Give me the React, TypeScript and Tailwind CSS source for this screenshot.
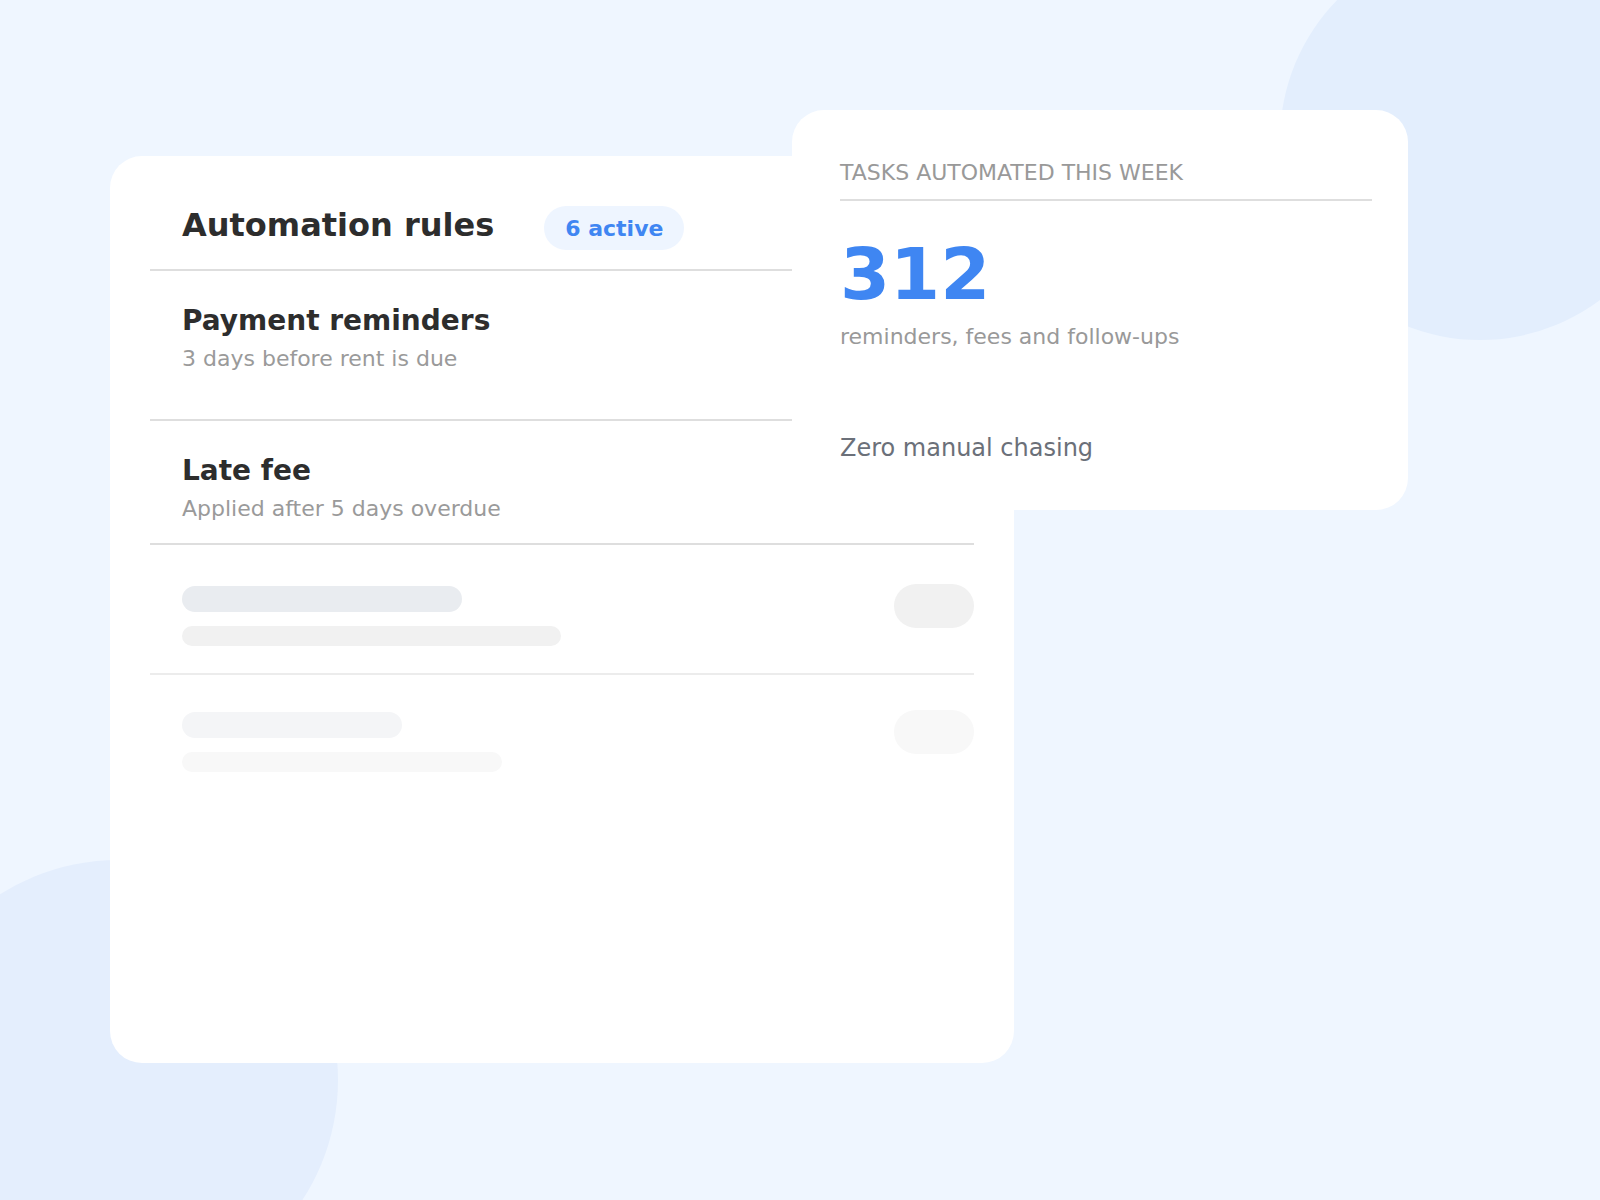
const rules = [
  { title: "Payment reminders", detail: "3 days before rent is due", pad: "pb-[47px]" },
  { title: "Late fee", detail: "Applied after 5 days overdue", pad: "pb-[21px]" },
];

function RuleRow({ title, detail, pad }: { title: string; detail: string; pad: string }) {
  return (
    <div className={`px-[32px] pt-[33px] border-b-2 border-[#dedede] ${pad}`}>
      <div className="text-[28px] leading-[33px] font-bold text-[#2d2d2d]">{title}</div>
      <div className="mt-[9px] text-[22px] leading-[26px] text-[#9a9a9a]">{detail}</div>
    </div>
  );
}

export default function App() {
  return (
    <div className="relative min-h-screen w-full overflow-hidden bg-[#eff6ff] font-['DejaVu_Sans',sans-serif]">
      {/* background blobs */}
      <div className="absolute left-[1280px] top-[-60px] h-[400px] w-[400px] rounded-full bg-[#e3eefd]" />
      <div className="absolute left-[-102px] top-[860px] h-[440px] w-[440px] rounded-full bg-[#e4eefd]" />

      <div className="relative pt-[156px] pl-[110px]">
        {/* Automation rules card */}
        <div className="h-[907px] w-[904px] rounded-[32px] bg-white px-[40px] pt-[50px]">
          <div className="flex items-baseline gap-[50px] border-b-2 border-[#dedede] px-[32px] pb-[19px]">
            <h1 className="text-[32px] leading-[37px] font-bold text-[#2d2d2d]">Automation rules</h1>
            <span className="flex h-[44px] items-center rounded-full bg-[#eef5ff] px-[21px] text-[22px] font-bold text-[#3f86f2]">
              6 active
            </span>
          </div>

          {rules.map((r) => (
            <RuleRow key={r.title} {...r} />
          ))}

          {/* loading placeholders */}
          <div className="flex items-start justify-between border-b-2 border-[#ececec] pl-[32px] pt-[39px] pb-[27px]">
            <div className="pt-[2px]">
              <div className="h-[26px] w-[280px] rounded-full bg-[#e9ecf0]" />
              <div className="mt-[14px] h-[20px] w-[379px] rounded-full bg-[#f1f1f1]" />
            </div>
            <div className="h-[44px] w-[80px] rounded-full bg-[#f1f1f1]" />
          </div>
          <div className="flex items-start justify-between pl-[32px] pt-[35px]">
            <div className="pt-[2px]">
              <div className="h-[26px] w-[220px] rounded-full bg-[#f4f5f7]" />
              <div className="mt-[14px] h-[20px] w-[320px] rounded-full bg-[#f8f8f8]" />
            </div>
            <div className="h-[44px] w-[80px] rounded-full bg-[#f8f8f8]" />
          </div>
        </div>

        {/* weekly stats card, overlapping the rules card */}
        <div className="absolute left-[792px] top-[110px] h-[400px] w-[616px] rounded-[32px] bg-white pl-[48px] pt-[50px]">
          <div className="w-[532px] border-b-2 border-[#dedede] pb-[13px] text-[22px] leading-[26px] text-[#999999] uppercase">
            Tasks automated this week
          </div>
          <div className="mt-[31px] text-[72px] leading-[84px] font-bold text-[#3f86f2]">312</div>
          <div className="mt-[8px] text-[22px] leading-[26px] text-[#999999]">reminders, fees and follow-ups</div>
          <div className="mt-[84px] text-[24px] leading-[28px] text-[#6b7079]">Zero manual chasing</div>
        </div>
      </div>
    </div>
  );
}
